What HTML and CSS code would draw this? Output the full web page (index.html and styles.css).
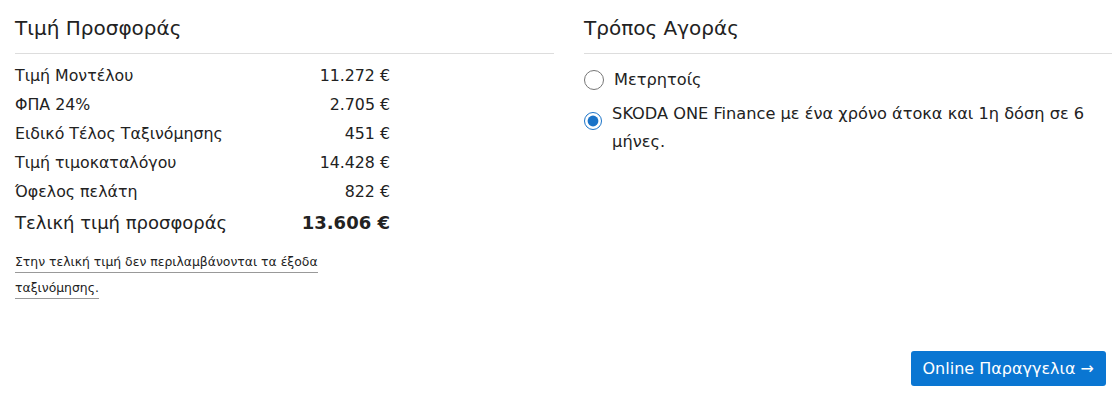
FILE: index.html
```html
<!DOCTYPE html>
<html lang="el">
<head>
  <meta charset="UTF-8">
  <meta name="viewport" content="width=device-width, initial-scale=1.0">
  <title>Τιμή Προσφοράς</title>
  <link rel="stylesheet" href="styles.css">
</head>
<body>
  <div class="offer">
    <section class="price">
      <h2>Τιμή Προσφοράς</h2>
      <table class="price-table">
        <tr><td>Τιμή Μοντέλου</td><td>11.272 €</td></tr>
        <tr><td>ΦΠΑ 24%</td><td>2.705 €</td></tr>
        <tr><td>Ειδικό Τέλος Ταξινόμησης</td><td>451 €</td></tr>
        <tr><td>Τιμή τιμοκαταλόγου</td><td>14.428 €</td></tr>
        <tr><td>Όφελος πελάτη</td><td>822 €</td></tr>
        <tr class="total"><td>Τελική τιμή προσφοράς</td><td>13.606 €</td></tr>
      </table>
      <p class="note"><span>Στην τελική τιμή δεν περιλαμβάνονται τα έξοδα ταξινόμησης.</span></p>
    </section>

    <section class="payment">
      <h2>Τρόπος Αγοράς</h2>
      <label class="option">
        <input type="radio" name="pay">
        <span>Μετρητοίς</span>
      </label>
      <label class="option">
        <input type="radio" name="pay" checked>
        <span>SKODA ONE Finance με ένα χρόνο άτοκα και 1η δόση σε 6 μήνες.</span>
      </label>
      <div class="actions">
        <button class="order">Online Παραγγελια →</button>
      </div>
    </section>
  </div>
</body>
</html>
```

FILE: styles.css
```css
/* page */
body {
  margin: 0;
  font-family: "DejaVu Sans", Verdana, sans-serif;
  color: #222;
  background: #fff;
}

.offer {
  display: grid;
  grid-template-columns: 539px 1fr;
  column-gap: 30px;
  padding: 14px 0 0 15px;
  height: 396px;
}

h2 {
  font-size: 20px;
  font-weight: normal;
  margin: 0;
  padding-bottom: 11px;
  border-bottom: 1px solid #ddd;
  line-height: 28px;
}

.price-table {
  border-collapse: collapse;
  width: 375px;
  margin-top: 7px;
  font-size: 15.8px;
}

.price-table td {
  padding: 0;
  height: 29px;
}

.price-table td:last-child {
  text-align: right;
}

.price-table .total td {
  font-size: 18px;
  height: 33px;
}

.price-table .total td:last-child {
  font-weight: bold;
}

.note {
  margin: 10px 0 0;
  width: 330px;
  font-size: 12.4px;
  line-height: 26px;
}

.note span {
  border-bottom: 1px solid #999;
  padding-bottom: 3px;
}

.payment {
  display: flex;
  flex-direction: column;
}

.option {
  display: flex;
  align-items: flex-start;
  gap: 10px;
  font-size: 16.2px;
  line-height: 28px;
  padding-right: 20px;
}

.option:first-of-type {
  margin-top: 12px;
}

.option + .option {
  margin-top: 6px;
}

.option input {
  margin: 4px 0 0 0;
  width: 20px;
  height: 20px;
  accent-color: #1a73c8;
}

.option:last-of-type input {
  margin-top: 11px;
}

.actions {
  margin-top: auto;
  display: flex;
  justify-content: flex-end;
  padding-right: 6px;
  padding-bottom: 24px;
}

.order {
  font-family: inherit;
  font-size: 16px;
  color: #fff;
  background: #0a76d2;
  border: none;
  border-radius: 3px;
  height: 35px;
  padding: 0 12px;
}
```
